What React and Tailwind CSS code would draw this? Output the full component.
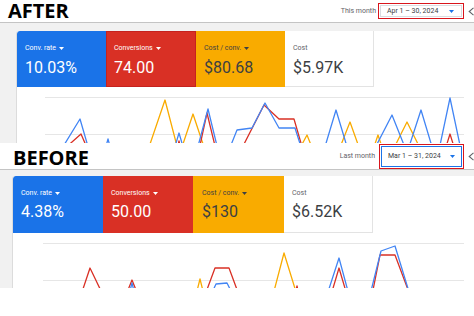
import React from "react";

function Caret({ className }) {
  return (
    <svg width="5" height="3" viewBox="0 0 5 3" className={className}>
      <path d="M0 0h5L2.5 3z" fill="currentColor" />
    </svg>
  );
}

function Chevron({ className }) {
  return (
    <svg width="6" height="9" viewBox="0 0 6 9" className={className}>
      <path d="M5.5 0.8 L1.2 4.5 L5.5 8.2" fill="none" stroke="#5f6368" strokeWidth="1.1" />
    </svg>
  );
}

function Tile({ label, value, tileClass, labelClass, valueClass, caret }) {
  return (
    <div className={tileClass}>
      <div className={"flex items-center text-[7px] leading-[8px] " + labelClass}>
        <span>{label}</span>
        {caret && <Caret className="ml-[3px]" />}
      </div>
      <div className={"text-[16px] leading-[16px] " + valueClass}>{value}</div>
    </div>
  );
}

function Chart({ width, height, viewBox, grid, x1, x2, blue, red, orange }) {
  return (
    <svg width={width} height={height} viewBox={viewBox} className="block shrink-0">
      {grid.map((y) => (
        <line key={y} x1={x1} x2={x2} y1={y} y2={y} stroke="#e6e6e6" strokeWidth="1" />
      ))}
      {orange.map((p, i) => (
        <polyline key={"o" + i} points={p} fill="none" stroke="#f9ab00" strokeWidth="1.3" strokeLinejoin="round" />
      ))}
      {red.map((p, i) => (
        <polyline key={"r" + i} points={p} fill="none" stroke="#d93025" strokeWidth="1.3" strokeLinejoin="round" />
      ))}
      {blue.map((p, i) => (
        <polyline key={"b" + i} points={p} fill="none" stroke="#4285f4" strokeWidth="1.3" strokeLinejoin="round" />
      ))}
    </svg>
  );
}

const afterBlue = [
  "61,150 80,119 89,150",
  "105,150 108,139 111,150",
  "174,150 179,133 184,150",
  "197,150 208,109 218,150",
  "229,150 237,130 252,128 265,103 279,128 295,128 302,150",
  "324,150 336,110 348,150",
  "374,150 392,115 406,150",
  "408,150 421,110 433,150",
  "439,150 450,98 461,150",
];
const afterRed = [
  "63,150 81,134 88,150",
  "177,150 179,141 181,150",
  "199,150 207,113 216,150",
  "241,150 264,105 279,119 294,119 303,150",
  "445,150 450,134 455,150",
];
const afterOrange = [
  "148,150 165,100 178,150",
  "181,150 193,114 205,150",
  "299,150 307,135 313,150",
  "339,150 350,122 360,150",
  "373,150 378,135 383,150",
  "393,150 407,122 421,150",
];

const beforeBlue = [
  "129,295 132,283 135,295",
  "211,295 216,284 227,283 233,295",
  "327,295 339,258 349,295",
  "370,295 381,251 395,246 410,295",
];
const beforeRed = [
  "81,295 90,268 103,295",
  "126,295 132,280 138,295",
  "205,295 215,268 229,268 239,295",
  "295,295 297,286 299,295",
  "331,295 339,268 347,295",
  "372,295 380,255 395,255 410,295",
];
const beforeOrange = [
  "196,295 200,279 204,295",
  "273,295 284,253 297,295",
];

export default function App() {
  return (
    <div className="w-[474px] h-[316px] overflow-hidden bg-white font-['Roboto',sans-serif]">
      {/* AFTER */}
      <section className="h-[143px] flex flex-col">
        <header className="h-[23px] shrink-0 flex items-center justify-between border-b border-[#c4c4c4] bg-white">
          <span className="pl-[8px] font-['Open_Sans',sans-serif] font-bold text-[20px] leading-[22px] text-black">
            AFTER
          </span>
          <div className="flex items-center">
            <span className="text-[7px] leading-none text-[#5f6368]">This month</span>
            <div className="ml-[2px] w-[86px] h-[16px] border-[1.5px] border-[#d9151c] p-px">
              <div className="h-full bg-white border border-[#dadce0] flex items-center justify-between pl-[6px] pr-[7px]">
                <span className="text-[7px] leading-none text-[#3c4043]">Apr 1 – 30, 2024</span>
                <Caret className="text-[#1a73e8]" />
              </div>
            </div>
            <Chevron className="ml-[4px]" />
          </div>
        </header>
        <div className="flex-1 min-h-0 bg-[#f1f1f1] pl-[16px] pt-[8px]">
          <div className="h-full bg-white border-l border-[#dcdcdc] rounded-tl-[3px] flex flex-col overflow-hidden">
            <div className="flex h-[56px] shrink-0">
              <Tile
                tileClass="w-[89px] bg-[#1a73e8] pl-[8px] pt-[13px] flex flex-col gap-[8px] rounded-tl-[3px]"
                labelClass="text-white"
                valueClass="text-white"
                label="Conv. rate"
                value="10.03%"
                caret
              />
              <Tile
                tileClass="w-[90px] bg-[#d93025] border border-[#c5221f] pl-[7px] pt-[12px] flex flex-col gap-[8px]"
                labelClass="text-white"
                valueClass="text-white"
                label="Conversions"
                value="74.00"
                caret
              />
              <Tile
                tileClass="w-[89px] bg-[#f9ab00] pl-[8px] pt-[13px] flex flex-col gap-[8px]"
                labelClass="text-[#3c4043]"
                valueClass="text-[#3c4043]"
                label="Cost / conv."
                value="$80.68"
                caret
              />
              <Tile
                tileClass="w-[89px] bg-white border-r border-b border-[#e3e3e3] pl-[8px] pt-[13px] flex flex-col gap-[8px]"
                labelClass="text-[#5f6368]"
                valueClass="text-[#3c4043]"
                label="Cost"
                value="$5.97K"
              />
            </div>
            <Chart
              width={457}
              height={56}
              viewBox="17 87 457 56"
              grid={[97.5, 134.5]}
              x1={45}
              x2={464}
              blue={afterBlue}
              red={afterRed}
              orange={afterOrange}
            />
          </div>
        </div>
      </section>

      {/* BEFORE */}
      <section className="h-[145px] flex flex-col">
        <header className="h-[27px] shrink-0 flex items-center justify-between border-b border-[#c4c4c4] bg-white">
          <span className="pl-[13px] mt-[4px] font-['Open_Sans',sans-serif] font-bold text-[20px] leading-[22px] text-black">
            BEFORE
          </span>
          <div className="flex items-center">
            <span className="text-[7px] leading-none text-[#5f6368]">Last month</span>
            <div className="ml-[4px] w-[85px] h-[25px] border-[1.5px] border-[#d9151c] p-px">
              <div className="h-full bg-white border border-[#1a73e8] flex items-center justify-between pl-[6px] pr-[6px]">
                <span className="text-[7px] leading-none text-[#3c4043]">Mar 1 – 31, 2024</span>
                <Caret className="text-[#1a73e8]" />
              </div>
            </div>
            <Chevron className="ml-[4px]" />
          </div>
        </header>
        <div className="flex-1 min-h-0 bg-[#f1f1f1] pl-[12px] pt-[6px]">
          <div className="h-full bg-white border-l border-[#dcdcdc] rounded-tl-[3px] flex flex-col overflow-hidden">
            <div className="flex h-[57px] shrink-0">
              <Tile
                tileClass="w-[90px] bg-[#1a73e8] pl-[8px] pt-[13px] flex flex-col gap-[7px] rounded-tl-[3px]"
                labelClass="text-white"
                valueClass="text-white"
                label="Conv. rate"
                value="4.38%"
                caret
              />
              <Tile
                tileClass="w-[90px] bg-[#d93025] pl-[8px] pt-[13px] flex flex-col gap-[7px]"
                labelClass="text-white"
                valueClass="text-white"
                label="Conversions"
                value="50.00"
                caret
              />
              <Tile
                tileClass="w-[91px] bg-[#f9ab00] pl-[9px] pt-[13px] flex flex-col gap-[7px]"
                labelClass="text-[#3c4043]"
                valueClass="text-[#3c4043]"
                label="Cost / conv."
                value="$130"
                caret
              />
              <Tile
                tileClass="w-[89px] bg-white border-r border-b border-[#e3e3e3] pl-[8px] pt-[13px] flex flex-col gap-[7px]"
                labelClass="text-[#5f6368]"
                valueClass="text-[#3c4043]"
                label="Cost"
                value="$6.52K"
              />
            </div>
            <Chart
              width={461}
              height={55}
              viewBox="13 233 461 55"
              grid={[243.5, 280.5]}
              x1={43}
              x2={464}
              blue={beforeBlue}
              red={beforeRed}
              orange={beforeOrange}
            />
          </div>
        </div>
      </section>
    </div>
  );
}
